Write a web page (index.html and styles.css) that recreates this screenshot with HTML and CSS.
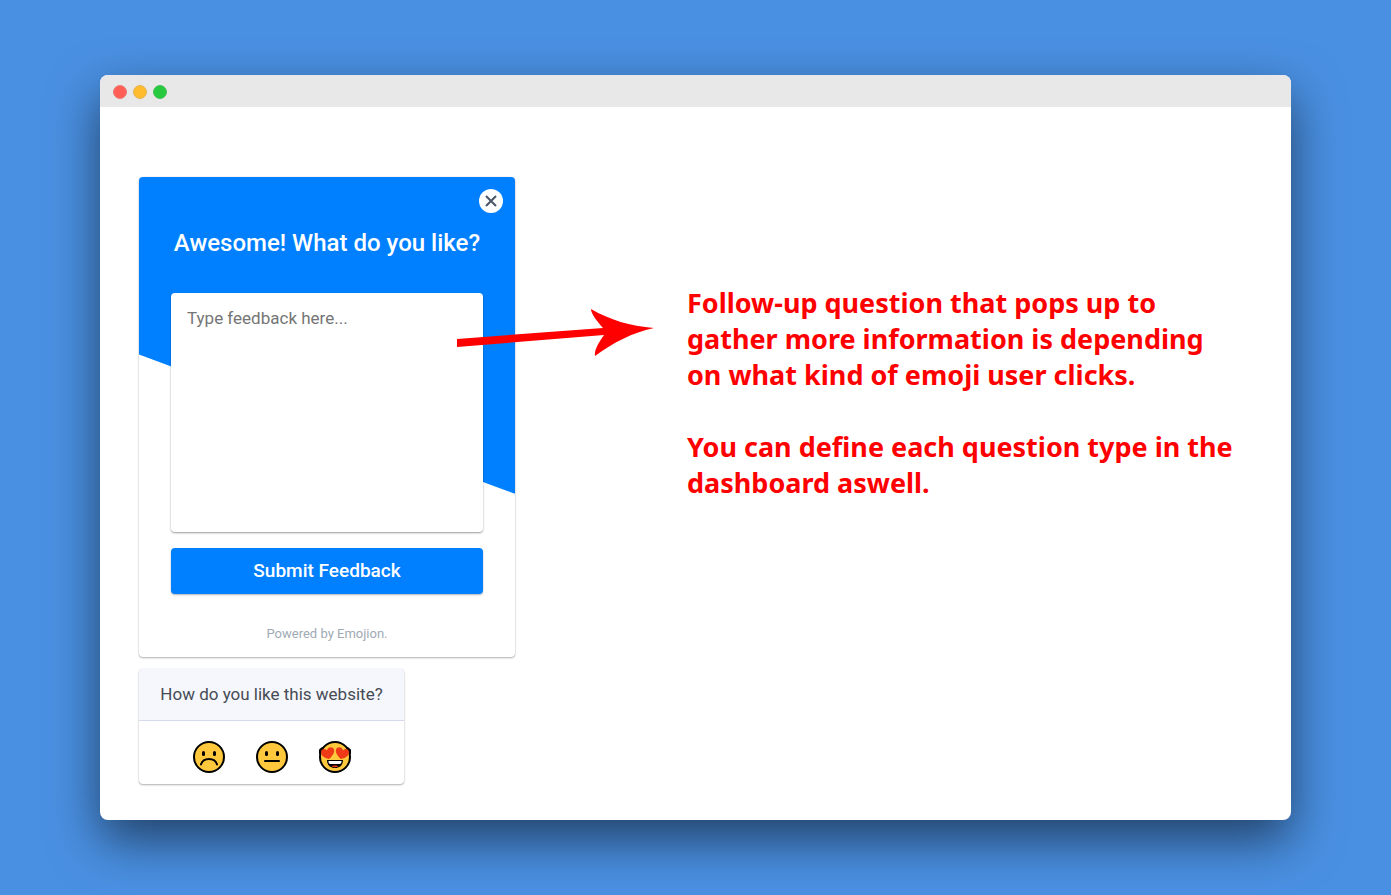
FILE: index.html
```html
<!DOCTYPE html>
<html lang="en">
<head>
<meta charset="utf-8">
<title>Emojion feedback</title>
<link rel="stylesheet" href="styles.css">
</head>
<body>
<div class="window">
  <header class="titlebar">
    <span class="dot dot-close"></span>
    <span class="dot dot-minimize"></span>
    <span class="dot dot-zoom"></span>
  </header>
  <main class="stage">
    <div class="widgets">
      <form class="feedback">
        <button class="close" type="button" aria-label="Close">
          <svg width="12" height="12" viewBox="0 0 12 12"><path d="M1 1l10 10M11 1l-10 10" fill="none" stroke="#4a5568" stroke-width="2"/></svg>
        </button>
        <h1 class="title"><label for="message">Awesome! What do you like?</label></h1>
        <textarea class="message" id="message" placeholder="Type feedback here..."></textarea>
        <button class="submit" type="submit">Submit Feedback</button>
        <p class="powered">Powered by Emojion.</p>
      </form>
      <section class="rating">
        <h2 class="question">How do you like this website?</h2>
        <div class="faces">
          <button class="face" type="button" aria-label="Sad">
            <svg width="32" height="32" viewBox="0 0 32 32">
              <circle cx="16" cy="16" r="15" fill="#ffc83d" stroke="#000" stroke-width="2"/>
              <rect x="9" y="10" width="3" height="5" rx="1.500"/><rect x="20" y="10" width="3" height="5" rx="1.500"/>
              <path d="M8 23.500c2-7.500 14-7.500 16 0" fill="none" stroke="#000" stroke-width="2" stroke-linecap="round"/>
            </svg>
          </button>
          <button class="face" type="button" aria-label="Neutral">
            <svg width="32" height="32" viewBox="0 0 32 32">
              <circle cx="16" cy="16" r="15" fill="#ffc83d" stroke="#000" stroke-width="2"/>
              <rect x="9" y="10" width="3" height="5" rx="1.500"/><rect x="20" y="10" width="3" height="5" rx="1.500"/>
              <path d="M9 20h14" fill="none" stroke="#000" stroke-width="2" stroke-linecap="round"/>
            </svg>
          </button>
          <button class="face" type="button" aria-label="Love">
            <svg width="32" height="32" viewBox="0 0 32 32">
              <circle cx="16" cy="16" r="15" fill="#ffc83d" stroke="#000" stroke-width="2"/>
              <path d="M4 6.500L1 9V13M28 6.500L31 9V13" fill="none" stroke="#000" stroke-width="2" stroke-linejoin="round"/>
              <path d="M10 18C5 17 2 14.500 2 11C2 7.500 6.500 7 8 9.500C8.500 5.500 14 5 15 8.500C16 12 12.500 16 10 18Z" fill="#f03a17"/>
              <path d="M22 18C27 17 30 14.500 30 11C30 7.500 25.500 7 24 9.500C23.500 5.500 18 5 17 8.500C16 12 19.500 16 22 18Z" fill="#f03a17"/>
              <path d="M8 19h16c0 5-3 8-8 8s-8-3-8-8z"/>
              <path d="M9.500 20h13v1q0 2-2 2H11.500q-2 0-2-2z" fill="#fff"/>
              <path d="M12.500 25.500c1-1.500 6-1.500 7 0q-3.500 1.500-7 0z" fill="#f03a17"/>
            </svg>
          </button>
        </div>
      </section>
      <svg class="arrow" width="198" height="48" viewBox="0 0 198 48" aria-hidden="true">
        <path d="M-1 30L146 19C140 12 134 5 134 0C153 11 173 17 197 19C175 24 157 33 138 47C137 41 142 33 147 26L0 38Z" fill="#f00"/>
      </svg>
    </div>
    <div class="notes">
      <p>Follow-up question that pops up to<br>gather more information is depending<br>on what kind of emoji user clicks.</p>
      <p>You can define each question type in the<br>dashboard aswell.</p>
    </div>
  </main>
</div>
</body>
</html>
```
FILE: styles.css
```css
* { box-sizing: border-box; }
body {
  display: flex;
  min-height: 100vh;
  margin: 0;
  padding: 75px 100px;
  background: #4a90e2;
  font-family: Roboto, sans-serif;
}
h1, h2, p { margin: 0; }
button { border: 0; padding: 0; font-family: inherit; cursor: pointer; }
svg { display: block; }
.window {
  flex: 1;
  background: #fff;
  border-radius: 8px;
  box-shadow: 0 20px 50px rgba(0, 0, 0, 0.55);
}
.titlebar {
  display: flex;
  align-items: center;
  gap: 6px;
  height: 32px;
  padding: 2px 13px 0;
  background: #e8e8e8;
  border-radius: 8px 8px 0 0;
}
.dot { width: 14px; height: 14px; border: 1px solid; border-radius: 50%; }
.dot-close { background: #ff5f56; border-color: #ec7a74; }
.dot-minimize { background: #ffbd2e; border-color: #e6b257; }
.dot-zoom { background: #27c93f; border-color: #4cbe5c; }
.stage {
  display: flex;
  align-items: flex-start;
  gap: 172px;
  padding: 70px 39px 36px;
}
.widgets {
  position: relative;
  display: flex;
  flex-direction: column;
  align-items: flex-start;
  gap: 12px;
}
.feedback, .rating {
  background: #fff;
  border-radius: 4px;
  box-shadow: 0 1px 2px rgba(0, 0, 0, 0.3), 0 0 1px rgba(0, 0, 0, 0.2);
}
.feedback {
  position: relative;
  isolation: isolate;
  display: flex;
  flex-direction: column;
  width: 376px;
  padding: 48px 32px 14px;
}
.feedback::before {
  content: "";
  position: absolute;
  inset: 0;
  z-index: -1;
  background: #0080ff;
  border-radius: 4px 4px 0 0;
  clip-path: polygon(0 0, 100% 0, 100% 66%, 0 37%);
}
.close {
  position: absolute;
  top: 12px;
  right: 12px;
  display: grid;
  place-items: center;
  width: 24px;
  height: 24px;
  background: #fff;
  border-radius: 50%;
}
.title {
  margin-bottom: 32px;
  color: #fff;
  font-size: 24px;
  font-weight: 500;
  line-height: 36px;
  text-align: center;
  white-space: nowrap;
}
.message {
  height: 239px;
  margin-bottom: 16px;
  padding: 13px 16px;
  border: 0;
  border-radius: 4px;
  box-shadow: 0 1px 2px rgba(0, 0, 0, 0.4);
  font: 17px/24px Roboto, sans-serif;
  resize: none;
}
.message::placeholder { color: #757575; }
.submit {
  height: 46px;
  margin-bottom: 30px;
  padding-bottom: 2px;
  background: #0080ff;
  border-radius: 4px;
  box-shadow: 0 1px 2px rgba(0, 0, 0, 0.3);
  color: #fff;
  font-size: 19px;
  font-weight: 500;
}
.powered {
  color: #a0aab4;
  font-size: 13px;
  line-height: 19px;
  text-align: center;
}
.question {
  padding: 13px 20px;
  background: #f5f7fc;
  border-bottom: 1px solid #d5daea;
  border-radius: 4px 4px 0 0;
  color: #454b54;
  font-size: 17px;
  font-weight: 400;
  line-height: 25px;
}
.rating { width: 265px; text-align: center; white-space: nowrap; }
.faces {
  display: flex;
  justify-content: center;
  gap: 31px;
  padding: 20px 24px 11px;
}
.face { background: none; }
.arrow { position: absolute; top: 132px; left: 318px; }
.notes {
  display: grid;
  gap: 36px;
  padding-top: 108px;
  color: #f00;
  font: 700 27px/36px "Noto Sans", sans-serif;
  white-space: nowrap;
}
```
